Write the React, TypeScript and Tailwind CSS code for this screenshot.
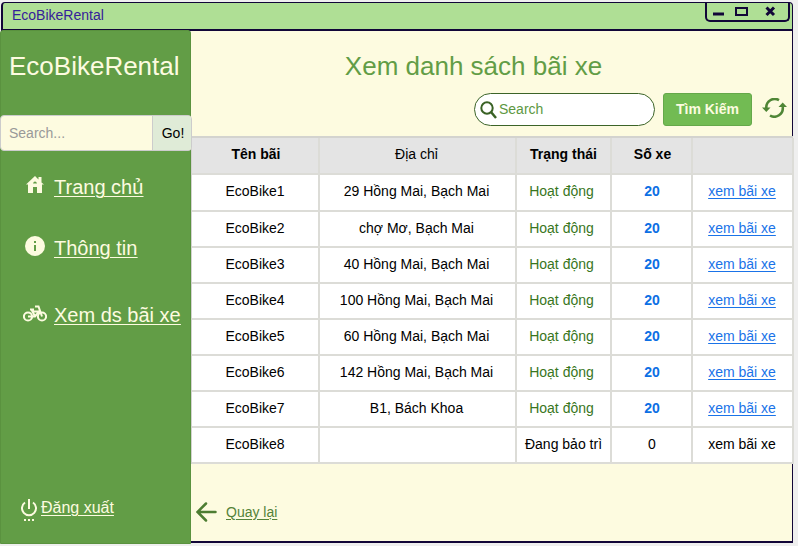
import React from "react";

const rows = [
  ["EcoBike1", "29 Hồng Mai, Bạch Mai"],
  ["EcoBike2", "chợ Mơ, Bạch Mai"],
  ["EcoBike3", "40 Hồng Mai, Bạch Mai"],
  ["EcoBike4", "100 Hồng Mai, Bạch Mai"],
  ["EcoBike5", "60 Hồng Mai, Bạch Mai"],
  ["EcoBike6", "142 Hồng Mai, Bạch Mai"],
  ["EcoBike7", "B1, Bách Khoa"],
  ["EcoBike8", ""],
];

const columns = "grid grid-cols-[128px_197px_95px_81px_101px]";
const cell = "flex items-center justify-center whitespace-nowrap border-r-2 border-b-2 border-[#dcdcd7] pb-[2px]";

function TitleBar() {
  return (
    <header className="ml-px flex h-[29px] w-[792px] shrink-0 justify-between rounded-t-[4px] border-t border-r border-b-2 border-l-2 border-[#120638] bg-[#afdf95]">
      <span className="pl-[9px] text-[14px] leading-[25px] text-[#35209a]">EcoBikeRental</span>
      <div className="mr-[2px] h-[19px] w-[85px] rounded-b-[5px] border-x-2 border-b-2 border-[#120638]">
        <svg width="81" height="17" viewBox="0 0 81 17" fill="none" stroke="#120638">
          <path d="M6 11H17" strokeWidth="3" />
          <rect x="29" y="5" width="11" height="7" strokeWidth="2" />
          <path d="M59.5 4.5L67 12M67 4.5L59.5 12" strokeWidth="3" />
        </svg>
      </div>
    </header>
  );
}

function Sidebar() {
  return (
    <aside className="z-10 flex h-[514px] w-[191px] shrink-0 flex-col rounded-t-[3px] border border-[#5a923f] bg-[#629d46] text-[#fdfbe0]">
      <h1 className="mt-[19px] pl-2 text-[26px] leading-[32px] whitespace-nowrap">EcoBikeRental</h1>
      <div className="mt-[33px] -ml-px flex h-[36px] w-[192px] rounded-[4px] border border-[#ccc] bg-[#fdfbe0] text-[14px]">
        <span className="flex flex-1 items-center pl-[8px] text-[#999]">Search...</span>
        <button className="w-[39px] rounded-r-[3px] border-l border-[#ccc] bg-[#dfebd7] pl-[2px] text-black">Go!</button>
      </div>
      <nav className="text-[20px] leading-[24px] whitespace-nowrap underline decoration-1 underline-offset-2">
        <a className="mt-[24px] flex h-[24px] items-center">
          <svg className="-mt-[4px] mr-[10px] ml-[25px] shrink-0" width="18" height="18" viewBox="0 0 18 18" fill="#fdfbe0">
            <path fillRule="evenodd" d="M0 8.5L9 0L12.5 3.5V1H15.5V6.5L18 8.5H16V17H11V11H7V17H2V8.5ZM7 7.5H11Q10.5 5.5 9 5.5Q7.5 5.5 7 7.5Z" />
          </svg>
          <span>Trang chủ</span>
        </a>
        <a className="mt-[37px] flex h-[24px] items-center">
          <svg className="-mt-[4px] mr-[9px] ml-[24px] shrink-0" width="20" height="20" viewBox="0 0 20 20">
            <circle cx="10" cy="10" r="10" fill="#fdfbe0" />
            <path d="M9 5H11V7H9ZM9 9H11V15H9Z" fill="#629d46" />
          </svg>
          <span>Thông tin</span>
        </a>
        <a className="mt-[43px] flex h-[24px] items-center">
          <svg className="-mt-[3px] mr-[7px] ml-[22px] shrink-0" width="24" height="17" viewBox="0 0 24 17" fill="none" stroke="#fdfbe0" strokeWidth="2">
            <circle cx="5" cy="11.5" r="4.1" />
            <circle cx="19" cy="11.5" r="4.1" />
            <path d="M5 11.5H12L16.5 6M12 11.5L8.5 4.5M7 4.5H11M8.5 6.5H17M12 1.5H15.5L19 11.5" />
          </svg>
          <span>Xem ds bãi xe</span>
        </a>
      </nav>
      <a className="mt-auto mb-[19px] flex h-[30px] items-start">
        <svg className="mt-[5px] mr-[3px] ml-[20px] shrink-0" width="17" height="23" viewBox="0 0 17 23" fill="none" stroke="#fdfbe0" strokeWidth="2">
          <path d="M4 3.5A7 7 0 1 0 12 3.5M8 0V10" />
          <path d="M3 21H13" strokeDasharray="2 2" />
        </svg>
        <span className="text-[16px] leading-[27px] underline decoration-1 underline-offset-2">Đăng xuất</span>
      </a>
    </aside>
  );
}

function SearchBar() {
  return (
    <div className="mt-[11px] flex h-[33px] items-center pl-[283px]">
      <div className="flex h-[33px] w-[181px] items-center rounded-full border border-[#3c6428] bg-white">
        <svg className="mr-[2px] ml-[5px]" width="17" height="18" viewBox="0 0 17 18" fill="none" stroke="#3a6225" strokeWidth="2">
          <circle cx="7" cy="7" r="5.7" />
          <path d="M11 11L16 17" strokeWidth="2.5" />
        </svg>
        <span className="text-[14px] text-[#5d9842]">Search</span>
      </div>
      <button className="ml-[8px] h-[33px] w-[89px] rounded-[3px] border border-[#65a84a] bg-[#72bb53] text-[14px] font-bold whitespace-nowrap text-[#fdfbe0]">Tìm Kiếm</button>
      <svg className="ml-[10px] -mt-[4px]" width="25" height="20" viewBox="0 0 25 20" fill="none" stroke="#4f8636" strokeWidth="2.6">
        <path d="M17 2.1A8.5 8.5 0 0 0 4.3 10M8 17.5A8.5 8.5 0 0 0 20.7 9" />
        <path d="M0 9.5H8.5L4.3 14ZM16.5 9L20.7 4.5L25 9Z" fill="#4f8636" stroke="none" />
      </svg>
    </div>
  );
}

function BikeTable() {
  return (
    <div className="mt-[10px] w-[602px] border-t-2 border-l border-[#d3d3cf] bg-white text-[14px] text-black">
      <div className={`${columns} h-[37px] bg-[#e4e4e4] font-bold`}>
        <div className={`${cell} border-[#d0d0cd] pl-[2px]`}>Tên bãi</div>
        <div className={`${cell} border-[#d0d0cd] pr-[2px] font-normal`}>Địa chỉ</div>
        <div className={`${cell} border-[#d0d0cd]`}>Trạng thái</div>
        <div className={`${cell} border-[#d0d0cd] pl-[2px]`}>Số xe</div>
        <div className={`${cell} border-r border-[#d0d0cd]`} />
      </div>
      {rows.map(([name, address], i) => {
        const active = i < 7;
        return (
          <div key={name} className={`${columns} ${i === 0 ? "h-[37px]" : "h-[36px]"}`}>
            <div className={cell}>{name}</div>
            <div className={`${cell} pr-[2px]`}>{address}</div>
            <div className={`${cell} ${active ? "pr-[4px] text-[#38761d]" : ""}`}>{active ? "Hoạt động" : "Đang bảo trì"}</div>
            <div className={`${cell} pl-[1px] ${active ? "font-bold text-[#0c6fe4]" : ""}`}>{active ? 20 : 0}</div>
            <div className={`${cell} border-r pr-px ${active ? "text-[#1a73e8] underline underline-offset-2" : ""}`}>xem bãi xe</div>
          </div>
        );
      })}
    </div>
  );
}

export default function App() {
  return (
    <div className="flex h-[546px] w-[798px] flex-col overflow-hidden bg-[#efefef] pt-[2px] font-['Liberation_Sans',Arial,sans-serif]">
      <TitleBar />
      <div className="-mt-px flex">
        <Sidebar />
        <main className="mt-px flex h-[512px] w-[602px] flex-col border-r border-b-2 border-[#120638] bg-[#fdfbe0]">
          <h2 className="mt-[19px] pr-[36px] text-center text-[26px] leading-[32px] text-[#629d46]">Xem danh sách bãi xe</h2>
          <SearchBar />
          <BikeTable />
          <a className="mt-[37px] flex h-[22px] items-center text-[14px] text-[#548238] underline decoration-1 underline-offset-2">
            <svg className="mr-[9px] ml-[5px]" width="21" height="20" viewBox="0 0 21 20" fill="none" stroke="#4d7d32" strokeWidth="2.5" strokeLinecap="round">
              <path d="M10 1.5L1.5 10L10 18.5M2 10H19.5" />
            </svg>
            Quay lại
          </a>
        </main>
      </div>
    </div>
  );
}
